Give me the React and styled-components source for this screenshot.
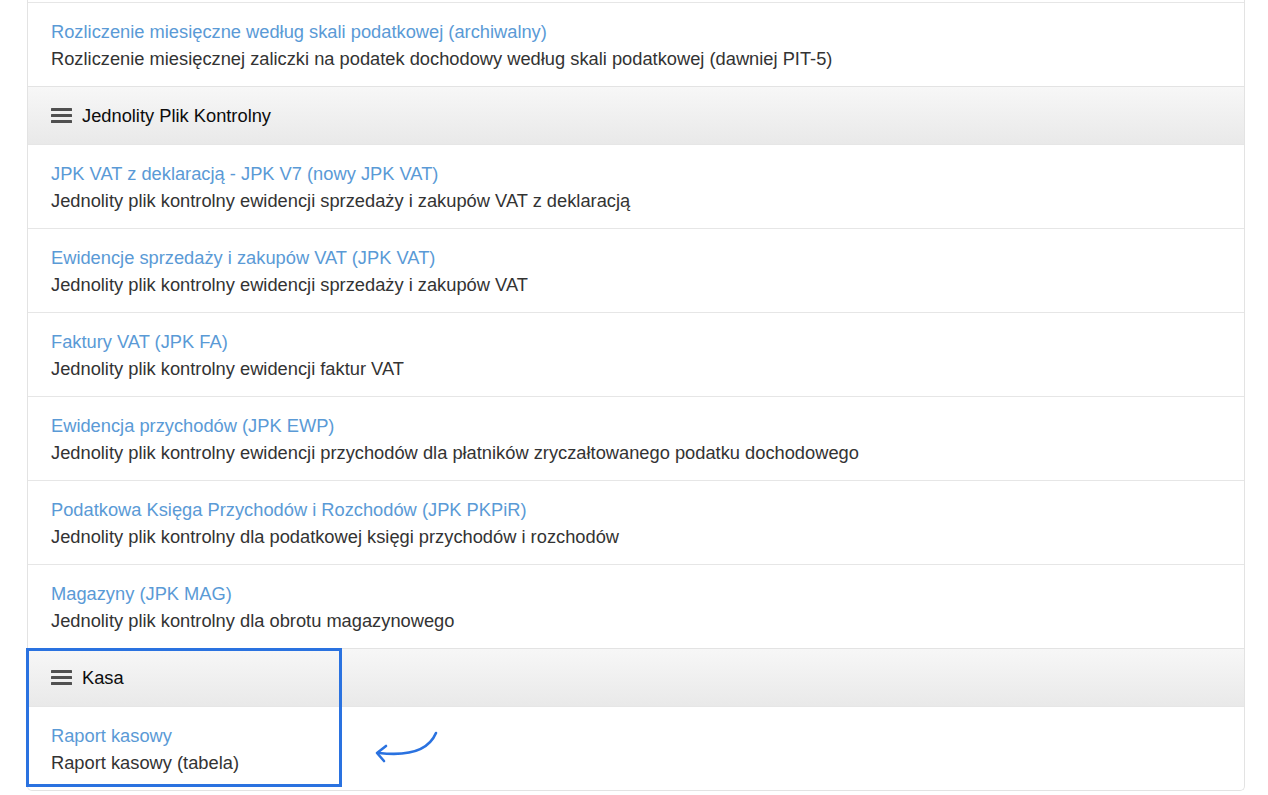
import React from "react";
import styled, { createGlobalStyle } from "styled-components";

const GlobalStyle = createGlobalStyle`
	html, body {
		margin: 0;
		padding: 0;
		background: #fff;
		font-family: "Liberation Sans", Arial, sans-serif;
	}
`;

const Page = styled.div`
	padding: 0 23px 0 27px;
	height: 795px;
	overflow: hidden;
`;

const Panel = styled.div`
	position: relative;
	padding-top: 2px;
	border: 1px solid #e3e3e3;
	border-top: none;
	border-radius: 0 0 5px 5px;
	background: #fff;
`;

const Row = styled.div`
	padding: 15px 23px 14px;
	border-top: 1px solid #e6e6e6;
`;

const ItemLink = styled.a`
	display: block;
	font-size: 18.3px;
	line-height: 27px;
	color: #5a9ad6;
	text-decoration: none;
`;

const ItemText = styled.div`
	font-size: 18.3px;
	line-height: 27px;
	color: #333;
`;

const Heading = styled.div`
	display: flex;
	align-items: center;
	gap: 10px;
	height: 57px;
	padding: 0 23px;
	border-top: 1px solid #e3e3e3;
	background: linear-gradient(to bottom, #f7f7f7 0%, #e9e9e9 100%);
	font-size: 18.3px;
	color: #0d0d0d;
`;

const MenuIcon = styled.svg`
	width: 21px;
	height: 17px;
	flex: none;
`;

const Highlight = styled.div`
	position: absolute;
	left: -2px;
	bottom: 3px;
	width: 310px;
	height: 133px;
	border: 3px solid #2a72e0;
	pointer-events: none;
`;

const Arrow = styled.svg`
	position: absolute;
	left: 344px;
	bottom: 26px;
	width: 68px;
	height: 34px;
`;

const Bars = () => (
	<MenuIcon viewBox="0 0 21 17">
		<rect x="0" y="1" width="21" height="3" rx="0.5" fill="#505050" />
		<rect x="0" y="7" width="21" height="3" rx="0.5" fill="#505050" />
		<rect x="0" y="13" width="21" height="3" rx="0.5" fill="#505050" />
	</MenuIcon>
);

const Item = ({ title, text }) => (
	<Row>
		<ItemLink href="#">{title}</ItemLink>
		<ItemText>{text}</ItemText>
	</Row>
);

const jpk = [
	["JPK VAT z deklaracją - JPK V7 (nowy JPK VAT)", "Jednolity plik kontrolny ewidencji sprzedaży i zakupów VAT z deklaracją"],
	["Ewidencje sprzedaży i zakupów VAT (JPK VAT)", "Jednolity plik kontrolny ewidencji sprzedaży i zakupów VAT"],
	["Faktury VAT (JPK FA)", "Jednolity plik kontrolny ewidencji faktur VAT"],
	["Ewidencja przychodów (JPK EWP)", "Jednolity plik kontrolny ewidencji przychodów dla płatników zryczałtowanego podatku dochodowego"],
	["Podatkowa Księga Przychodów i Rozchodów (JPK PKPiR)", "Jednolity plik kontrolny dla podatkowej księgi przychodów i rozchodów"],
	["Magazyny (JPK MAG)", "Jednolity plik kontrolny dla obrotu magazynowego"],
];

export default function App() {
	return (
		<>
			<GlobalStyle />
			<Page>
				<Panel>
					<Item
						title="Rozliczenie miesięczne według skali podatkowej (archiwalny)"
						text="Rozliczenie miesięcznej zaliczki na podatek dochodowy według skali podatkowej (dawniej PIT-5)"
					/>
					<Heading>
						<Bars />
						Jednolity Plik Kontrolny
					</Heading>
					{jpk.map(([t, d]) => (
						<Item key={t} title={t} text={d} />
					))}
					<Heading>
						<Bars />
						Kasa
					</Heading>
					<Item title="Raport kasowy" text="Raport kasowy (tabela)" />
					<Highlight />
					<Arrow viewBox="0 0 68 34">
						<path
							d="M64 3 C58 17 42 27 7 23"
							fill="none"
							stroke="#2a72e0"
							strokeWidth="2.6"
							strokeLinecap="round"
						/>
						<path
							d="M14 16 L5 23 L12 31"
							fill="none"
							stroke="#2a72e0"
							strokeWidth="2.6"
							strokeLinecap="round"
							strokeLinejoin="round"
						/>
					</Arrow>
				</Panel>
			</Page>
		</>
	);
}
